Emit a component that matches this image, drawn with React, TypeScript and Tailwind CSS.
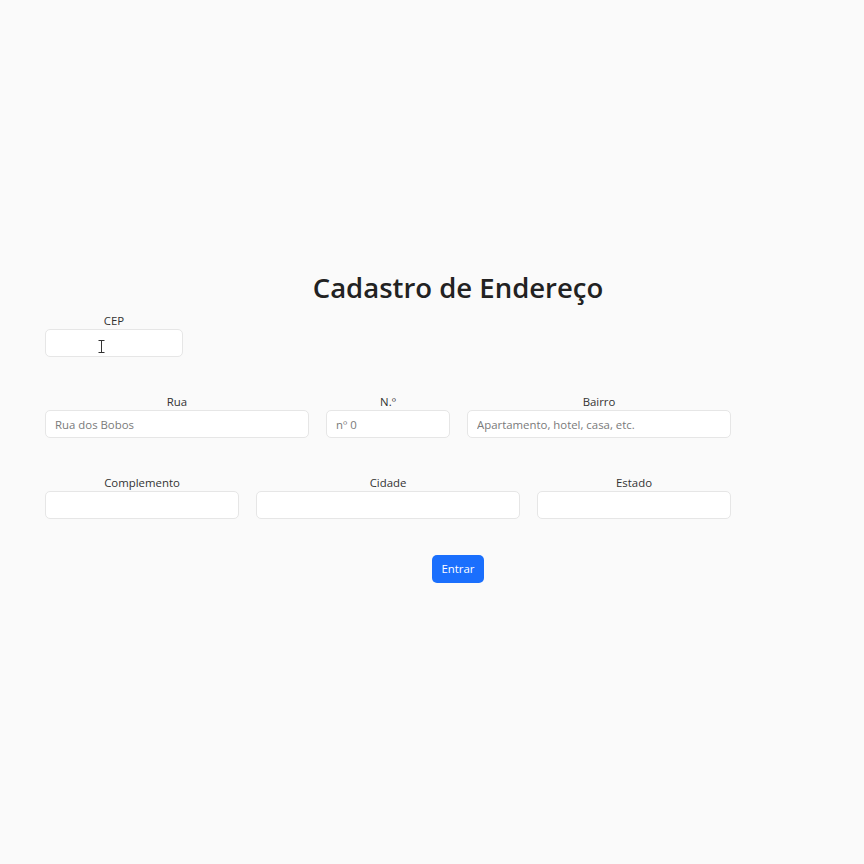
const font = { fontFamily: '"Open Sans", "Noto Sans", sans-serif' };

type Field = { label: string; width: string; placeholder?: string; cursor?: boolean };

const rows: Field[][] = [
  [{ label: "CEP", width: "w-[138px]", cursor: true }],
  [
    { label: "Rua", width: "w-[264px]", placeholder: "Rua dos Bobos" },
    { label: "N.º", width: "w-[124px]", placeholder: "nº 0" },
    { label: "Bairro", width: "w-[264px]", placeholder: "Apartamento, hotel, casa, etc." },
  ],
  [
    { label: "Complemento", width: "w-[194px]" },
    { label: "Cidade", width: "w-[264px]" },
    { label: "Estado", width: "w-[194px]" },
  ],
];

const FormField = ({ field }: { field: Field }) => (
  <div className={`flex flex-col ${field.width}`}>
    <label className="text-center text-[11.4px] leading-[17px] text-[#333]">{field.label}</label>
    <div className="relative">
      <input
        className="w-full h-[28px] bg-white border border-[#e6e6e6] rounded-[5px] px-[9px] text-[11.4px] text-[#333] placeholder:text-[#7a7a7a] outline-none"
        placeholder={field.placeholder}
        style={font}
      />
      {field.cursor && (
        <svg className="absolute left-[53px] top-[11px]" width="7" height="13" viewBox="0 0 7 13">
          <path d="M0.5 0.5h6M0.5 12.5h6M3.5 0.5v12" stroke="#333" strokeWidth="1" fill="none" />
        </svg>
      )}
    </div>
  </div>
);

export default function App() {
  return (
    <div className="min-h-screen bg-[#fafafa] pt-[268px]" style={font}>
      <div className="ml-[45px] w-[826px] flex flex-col">
        <h1 className="text-center text-[27.5px] leading-[40px] font-semibold text-[#222] mb-[4px]">
          Cadastro de Endereço
        </h1>
        <div className="flex flex-col gap-[36px]">
          {rows.map((row, i) => (
            <div key={i} className="flex gap-[17px]">
              {row.map((f) => (
                <FormField key={f.label} field={f} />
              ))}
            </div>
          ))}
          <div className="flex justify-center">
            <button className="h-[28px] px-[9px] rounded-[5px] bg-[#1a6ffd] text-white text-[11.4px]">Entrar</button>
          </div>
        </div>
      </div>
    </div>
  );
}
